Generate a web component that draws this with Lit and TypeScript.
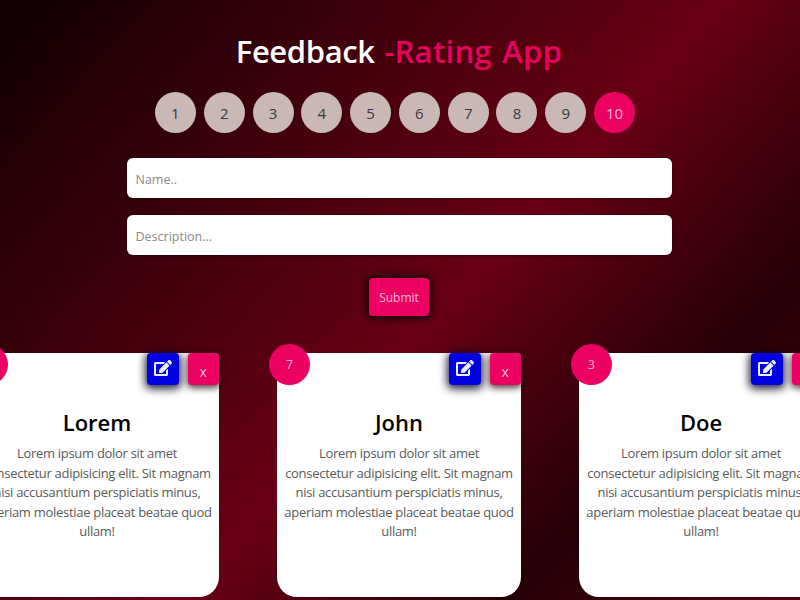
import { LitElement, html, css } from "lit";
import { customElement } from "lit/decorators.js";

const EDIT = "M402.6 83.2l90.2 90.2c3.8 3.8 3.8 10 0 13.8L274.4 405.6l-92.8 10.3c-12.4 1.4-22.9-9.1-21.5-21.5l10.3-92.8L388.8 83.2c3.8-3.8 10-3.8 13.8 0zm162-22.9l-48.8-48.8c-15.2-15.2-39.9-15.2-55.2 0l-35.4 35.4c-3.8 3.8-3.8 10 0 13.8l90.2 90.2c3.8 3.8 10 3.8 13.8 0l35.4-35.4c15.2-15.3 15.2-40 0-55.2zM384 346.2V448H64V128h229.8c3.2 0 6.2-1.3 8.5-3.5l40-40c7.6-7.6 2.2-20.5-8.5-20.5H48C21.5 64 0 85.5 0 112v352c0 26.5 21.5 48 48 48h352c26.5 0 48-21.5 48-48V306.2c0-10.7-12.9-16-20.5-8.5l-40 40c-2.2 2.3-3.5 5.3-3.5 8.5z";

const TEXT = "Lorem ipsum dolor sit amet consectetur adipisicing elit. Sit magnam nisi accusantium perspiciatis minus, aperiam molestiae placeat beatae quod ullam!";

@customElement("app-root")
export class AppRoot extends LitElement {
  static styles = css`
    :host {
      display: block;
      width: 800px;
      height: 600px;
      overflow: hidden;
      font-family: "Open Sans", "Noto Sans", sans-serif;
      background: linear-gradient(132deg, #140003 3%, #680014 54%, #240007 78%, #50000f 100%);
    }
    .page {
      box-sizing: border-box;
      width: 798px;
      height: 600px;
      display: flex;
      flex-direction: column;
      align-items: center;
      padding-top: 31px;
    }
    h1 {
      margin: 0;
      font-size: 31px;
      line-height: 40px;
      font-weight: 600;
      color: #fff;
      letter-spacing: -0.4px;
      word-spacing: 2px;
    }
    h1 span {
      color: #e9005f;
      letter-spacing: 0.3px;
    }
    .rates {
      display: flex;
      gap: 7.8px;
      margin: 21px 8px 0 0;
    }
    .rate {
      width: 41px;
      height: 41px;
      border-radius: 50%;
      display: flex;
      align-items: center;
      justify-content: center;
      background: #c9b8b5;
      color: #3a3a3a;
      font-size: 15px;
    }
    .rate.on {
      background: #ec0062;
      color: #fbd;
    }
    .fields {
      display: flex;
      flex-direction: column;
      gap: 17px;
      margin-top: 25px;
    }
    .field {
      box-sizing: border-box;
      width: 545px;
      height: 40px;
      border: 0;
      outline: 0;
      border-radius: 6px;
      padding: 2px 9px 0;
      font: inherit;
      font-size: 12.5px;
      background: #fff;
      box-shadow: 0 1px 3px rgba(30, 0, 5, 0.6);
    }
    .field::placeholder {
      color: #8a8a8a;
      opacity: 1;
    }
    .submit {
      margin-top: 23px;
      width: 60px;
      height: 38px;
      border: 0;
      border-radius: 4px;
      background: #ec0062;
      color: #fbd;
      font: inherit;
      font-size: 12px;
      padding: 0;
      box-shadow: 0 0 6px 3px #20000a;
    }
    .cards {
      display: flex;
      gap: 58px;
      justify-content: center;
      width: 100%;
      margin-top: 37px;
    }
    .card {
      position: relative;
      flex: 0 0 244px;
      box-sizing: border-box;
      height: 244px;
      background: #fff;
      border-radius: 4px 4px 20px 20px;
      padding: 55px 7px 0;
      text-align: center;
    }
    .badge {
      position: absolute;
      left: -8px;
      top: -9px;
      width: 41px;
      height: 41px;
      border-radius: 50%;
      background: #ec0062;
      color: #fbc;
      font-size: 12px;
      display: flex;
      align-items: center;
      justify-content: center;
    }
    .actions {
      position: absolute;
      top: 0;
      right: 0;
      display: flex;
      gap: 9px;
    }
    .btn {
      width: 31.5px;
      height: 32px;
      border: 0;
      padding: 0;
      border-radius: 4px;
      display: flex;
      align-items: center;
      justify-content: center;
      font: inherit;
      font-size: 14px;
      color: #fbd;
      background: #ec0062;
      box-shadow: 0 2px 7px 1px rgba(20, 0, 5, 0.75);
    }
    .btn.edit {
      background: #0000e0;
      box-shadow: 0 2px 8px 2px rgba(0, 0, 30, 0.85);
    }
    .btn svg {
      width: 18px;
      height: 16px;
      fill: #eef;
      margin-top: -2px;
    }
    .btn.del {
      padding-top: 4px;
    }
    h2 {
      margin: 0;
      font-size: 22px;
      line-height: 28px;
      font-weight: 600;
      color: #000;
    }
    p {
      margin: 8px 0 0;
      font-size: 13px;
      line-height: 19.5px;
      letter-spacing: -0.29px;
      color: #5a5a5a;
    }
  `;

  render() {
    const rates = [1, 2, 3, 4, 5, 6, 7, 8, 9, 10];
    const cards = [
      { n: 10, name: "Lorem" },
      { n: 7, name: "John" },
      { n: 3, name: "Doe" },
    ];
    return html`<div class="page">
      <h1>Feedback <span>-Rating App</span></h1>
      <div class="rates">
        ${rates.map((r) => html`<div class="rate ${r === 10 ? "on" : ""}">${r}</div>`)}
      </div>
      <div class="fields">
        <input class="field" placeholder="Name.." />
        <input class="field" placeholder="Description..." />
      </div>
      <button class="submit">Submit</button>
      <div class="cards">
        ${cards.map(
          (c) => html`<div class="card">
            <div class="badge">${c.n}</div>
            <div class="actions">
              <button class="btn edit">
                <svg viewBox="0 0 576 512"><path d="${EDIT}"></path></svg>
              </button>
              <button class="btn del">x</button>
            </div>
            <h2>${c.name}</h2>
            <p>${TEXT}</p>
          </div>`
        )}
      </div>
    </div>`;
  }
}
